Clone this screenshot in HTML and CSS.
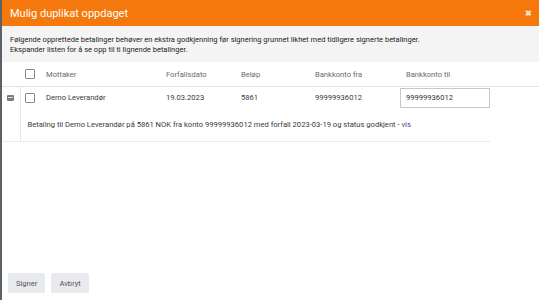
FILE: index.html
```html
<!DOCTYPE html>
<html>
<head>
  <title>Mulig duplikat oppdaget</title>
  <link rel="stylesheet" href="styles.css">
</head>
<body>

<div class="dialog">
  <div class="dialog-header">
    <span class="dialog-title">Mulig duplikat oppdaget</span>
    <span class="close">&#10006;</span>
  </div>

  <div class="info">
    Følgende opprettede betalinger behøver en ekstra godkjenning før signering grunnet likhet med tidligere signerte betalinger.<br>
    Ekspander listen for å se opp til ti lignende betalinger.
  </div>

  <table class="grid">
    <colgroup>
      <col class="c-expand">
      <col class="c-check">
      <col class="c-name">
      <col class="c-date">
      <col class="c-amount">
      <col class="c-from">
      <col class="c-to">
      <col>
    </colgroup>
    <thead>
      <tr>
        <th></th>
        <th><span class="box"></span></th>
        <th>Mottaker</th>
        <th>Forfallsdato</th>
        <th>Beløp</th>
        <th>Bankkonto fra</th>
        <th class="to-head">Bankkonto til</th>
        <th></th>
      </tr>
    </thead>
    <tbody>
      <tr class="row">
        <td><span class="collapse"></span></td>
        <td class="check-cell"><span class="box"></span></td>
        <td>Demo Leverandør</td>
        <td>19.03.2023</td>
        <td>5861</td>
        <td>99999936012</td>
        <td class="to-cell"><input type="text" class="account" value="99999936012"></td>
        <td class="blank"></td>
      </tr>
      <tr class="detail">
        <td></td>
        <td colspan="6" class="detail-text">Betaling til Demo Leverandør på 5861 NOK fra konto 99999936012 med forfall 2023-03-19 og status godkjent - <a href="#">vis</a></td>
        <td class="blank"></td>
      </tr>
    </tbody>
  </table>

  <div class="footer">
    <button type="button" class="btn">Signer</button>
    <button type="button" class="btn">Avbryt</button>
  </div>
</div>

</body>
</html>
```

FILE: styles.css
```css
html, body {
  margin: 0;
  height: 100%;
}

body {
  font-family: Roboto, "Liberation Sans", sans-serif;
  font-size: 7.6px;
  color: #3a3a3a;
  background-color: #fff;
  border-left: 2px solid #5b6168;
  box-sizing: border-box;
}

.dialog {
  display: flex;
  flex-direction: column;
  height: 100%;
}

.dialog-header {
  display: flex;
  align-items: center;
  justify-content: space-between;
  height: 26px;
  padding: 0 7px 0 8px;
  background-color: #f5780c;
  color: #fff;
}

.dialog-title {
  font-size: 11px;
}

.close {
  font-size: 8px;
  font-weight: bold;
  color: #fbe3cc;
}

.info {
  background-color: #f4f4f4;
  padding: 9px 8px 7px 8px;
  line-height: 10px;
  font-size: 7.5px;
  color: #222;
}

.grid {
  border-collapse: collapse;
  width: 100%;
  table-layout: fixed;
}

.c-expand { width: 18px; }
.c-check { width: 20px; }
.c-name { width: 120px; }
.c-date { width: 75px; }
.c-amount { width: 74px; }
.c-from { width: 91px; }
.c-to { width: 90px; }

.grid th {
  font-weight: normal;
  text-align: left;
  color: #6a6a6a;
  height: 24px;
  padding: 0 0 0 6px;
  border-bottom: 1px solid #e2e2e2;
}

.grid thead tr {
  border-bottom: 1px solid #e8e8e8;
}

.grid td {
  padding: 0 0 0 6px;
  height: 21px;
}

.grid .row td:first-child,
.grid .row .check-cell {
  padding: 0;
  text-align: center;
}

.grid .row td:first-child,
.grid .detail td:first-child {
  border-right: 1px solid #e6e6e6;
}

.grid th:nth-child(2) {
  padding: 0;
  text-align: center;
}

.grid .to-cell {
  padding: 0;
}

.box {
  display: inline-block;
  width: 8px;
  height: 8px;
  border: 1px solid #8a8a8a;
  border-radius: 1px;
  vertical-align: middle;
  background: #fff;
}

.collapse {
  display: inline-block;
  position: relative;
  width: 7px;
  height: 6px;
  border-radius: 1px;
  background-color: #7b7b7b;
  vertical-align: middle;
}

.collapse::after {
  content: "";
  position: absolute;
  left: 1px;
  right: 1px;
  top: 2px;
  height: 1px;
  background: #ddd;
}

.account {
  box-sizing: border-box;
  width: 90px;
  height: 20px;
  border: 1px solid #c8c8c8;
  padding: 0 5px;
  font-family: inherit;
  font-size: 7.6px;
  color: #333;
  margin: 0;
  display: block;
}

.grid .detail td {
  height: 33px;
  border-bottom: 1px solid #eaeaea;
}

.grid .detail .blank {
  border-bottom: none;
}

.grid .detail-text {
  padding-left: 7px;
}

.detail-text a {
  color: #4e3a8c;
  text-decoration: none;
}

.footer {
  margin-top: auto;
  display: flex;
  gap: 6px;
  padding: 0 0 7px 6px;
}

.btn {
  background-color: #e8eaed;
  border: none;
  border-radius: 2px;
  color: #555;
  font-family: inherit;
  font-size: 7.6px;
  height: 20px;
  padding: 0 8px;
}
```
